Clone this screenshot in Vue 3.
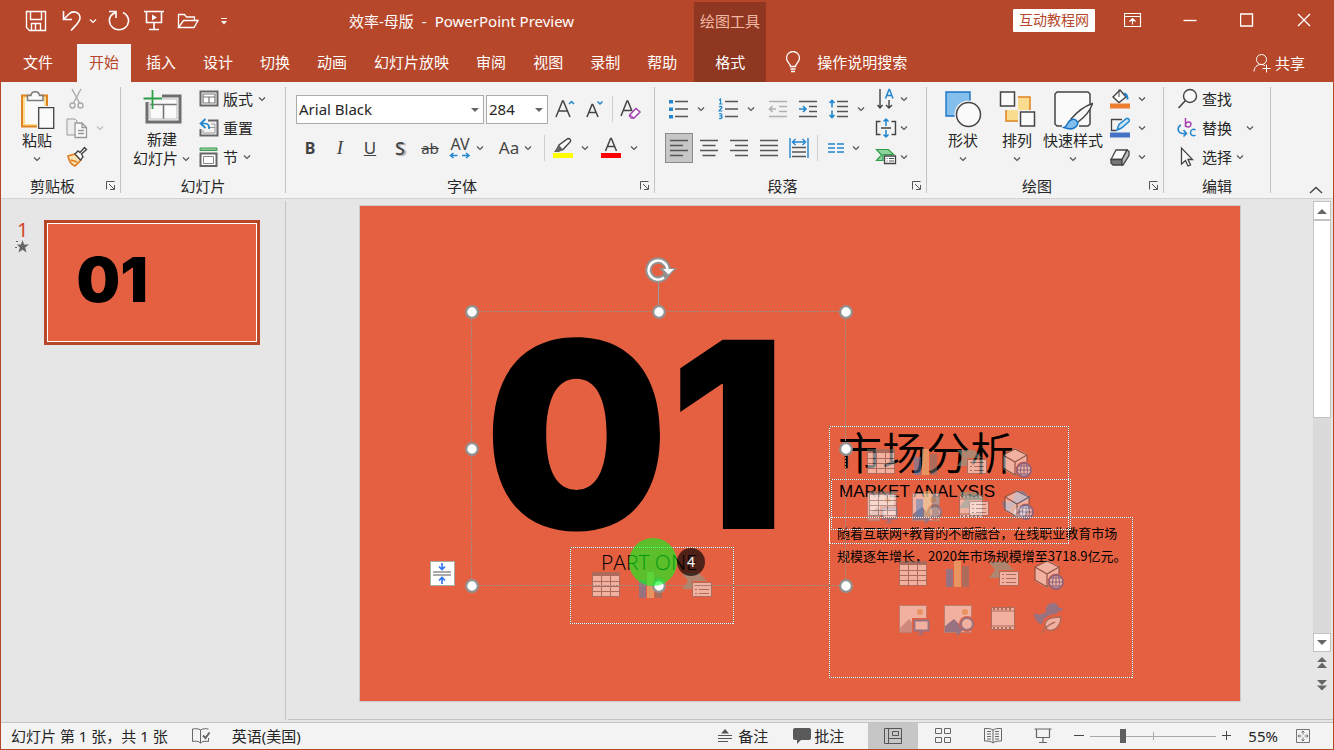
<script setup>
import { h, ref } from 'vue'

const Chevron = () =>
  h('svg', { class: 'chev', width: 10, height: 10, viewBox: '0 0 10 10', 'aria-hidden': 'true' }, [
    h('path', { d: 'M2 3.5L5 6.5L8 3.5', fill: 'none', stroke: 'currentColor', 'stroke-width': 1.2 }),
  ])

const Launcher = () =>
  h('button', { class: 'launcher', 'aria-label': 'Options' }, [
    h('svg', { width: 10, height: 10, viewBox: '0 0 10 10' }, [
      h('path', { d: 'M.5 8.5V.5H8.5M3 3L8 8M8.5 4V8.5H4', fill: 'none', stroke: '#555' }),
    ]),
  ])

const tabs = ['开始', '插入', '设计', '切换', '动画', '幻灯片放映', '审阅', '视图', '录制', '帮助']
const active = ref('开始')
const zoom = ref(25)
const handles = [
  [112, 106], [299, 106], [486, 106],
  [112, 243], [486, 243],
  [112, 380], [299, 380], [486, 380],
]
const contentIcons = ['table', 'chart', 'smartart', 'cube', 'picture', 'online', 'video', 'duck']
const placeholders = [
  { x: 507, y: 242, count: 8 },
  { x: 509, y: 284, count: 4 },
  { x: 539, y: 354, count: 8 },
  { x: 232, y: 365, count: 3 },
]
const frames = 'M469.500 220.500h239v117h-239zM471.500 273.500h239v50h-239zM469.500 311.500h303v160h-303zM210.500 341.500h163v76h-163z'
</script>

<template>
  <div class="window">
    <header class="top">
      <div class="titlebar">
        <div class="quick">
          <button aria-label="保存">
            <svg width="22" height="22" viewBox="0 0 22 22"><path d="M1.500 1.500h19v19h-16l-3-3zM5.500 1.500v8h11v-8M6.500 20.500v-7h9v7M10.500 14v6" stroke-width="1.400" /></svg>
          </button>
          <button class="undo" aria-label="撤销">
            <svg width="20" height="22" viewBox="0 0 20 22"><path d="M1.500 1v8.500h8.500M2 9l5-5c4-4 11-2 11 4 0 4-4 7-9 12.500" stroke-width="1.600" /></svg>
          </button>
          <Chevron />
          <button class="redo" aria-label="重复">
            <svg width="22" height="22" viewBox="0 0 22 22"><path d="M1 1.500h7v6.500M7.500 2.500C3 4.500 1 8 1.500 11.500c1 11 18 11 19 0C21 8 18.500 4 15 2.500" stroke-width="1.600" /></svg>
          </button>
          <button class="show" aria-label="放映">
            <svg width="20" height="22" viewBox="0 0 20 22"><path d="M0 1.500h20M2.500 2v10.500h15V2M10 13v6.500M5 19.500h10" stroke-width="1.600" /><path d="M8 4.500l5 3-5 3z" fill="#fff" stroke="none" /></svg>
          </button>
          <button class="open" aria-label="打开">
            <svg width="22" height="18" viewBox="0 0 22 18"><path d="M1.500 15.500V2.500h6l2 2.500h8v3.500M1.500 15.500l5-7h14.500l-4 7z" stroke-width="1.300" /></svg>
          </button>
          <button class="custom" aria-label="自定义">
            <svg width="8" height="10" viewBox="0 0 8 10"><path d="M1 2.500h6" /><path d="M1 5h6l-3 3.500z" fill="#fff" stroke="none" /></svg>
          </button>
        </div>
        <div class="doc-title"><span>效率-母版</span><span>-</span><span>PowerPoint Preview</span></div>
        <div class="context-title">绘图工具</div>
        <div class="controls">
          <span class="badge">互动教程网</span>
          <button aria-label="功能区显示选项">
            <svg width="18" height="14" viewBox="0 0 18 14"><path d="M.5 .5h16v13h-16zM.5 3.500h16M8.500 11.500v-6M5.500 8.500l3-3 3 3" stroke-width="1.200" /></svg>
          </button>
          <button aria-label="最小化"><svg width="14" height="14" viewBox="0 0 14 14"><path d="M.5 7.500h13" stroke-width="1.400" /></svg></button>
          <button aria-label="最大化"><svg width="14" height="14" viewBox="0 0 14 14"><path d="M.5 1h12v12h-12z" stroke-width="1.400" /></svg></button>
          <button aria-label="关闭"><svg width="14" height="14" viewBox="0 0 14 14"><path d="M1 1l12 12M13 1L1 13" stroke-width="1.400" /></svg></button>
        </div>
      </div>
      <nav class="tabs">
        <button class="tab file">文件</button>
        <button v-for="t in tabs" :key="t" class="tab" :class="{ active: t === active }" @click="active = t">{{ t }}</button>
        <button class="tab context">格式</button>
        <button class="tell">
          <svg width="16" height="22" viewBox="0 0 16 22"><path d="M5.500 15.500c0-3-4-4-4-8.500a6.500 6.500 0 0 1 13 0c0 4.500-4 5.500-4 8.500zM5.500 18h5M6 20.500h4" stroke-width="1.300" /></svg>
          操作说明搜索
        </button>
        <button class="share">
          <svg width="20" height="20" viewBox="0 0 20 20"><circle cx="8.500" cy="6.500" r="5" /><path d="M1 18.500c0-4 3-7 7-7 1.500 0 3 .5 4 1.200M13.500 11.500v8M9.500 15.500h8" /></svg>
          共享
        </button>
      </nav>
    </header>

    <section class="ribbon">
      <div class="group clipboard">
        <div class="body">
          <button class="big">
            <svg width="36" height="40" viewBox="0 0 36 40">
              <path d="M3 5.500h25v31H3z" fill="#fbdc93" stroke="#e08321" stroke-width="2" /><path d="M6 8h19v26H6z" fill="#fafafa" />
              <path d="M8.500 10.500v-5h3.500c.5-5 8-5 8.500 0h3.500v5z" fill="#fafafa" stroke="#7d7d7d" stroke-width="1.500" />
              <path d="M18 16h19v24H18z" fill="#f3f3f3" /><path d="M19.700 17.700h15v20.600h-15z" fill="#fafafa" stroke="#444" stroke-width="1.300" />
            </svg>
            <span>粘贴</span><Chevron />
          </button>
          <div class="small">
            <button class="dim" aria-label="剪切">
              <svg width="22" height="22" viewBox="0 0 22 22" stroke="#aaa" stroke-width="1.400"><path d="M6 1l7.500 14M15 1L7.500 15" /><circle cx="6.500" cy="17.500" r="2.500" /><circle cx="14.500" cy="17.500" r="2.500" /></svg>
            </button>
            <button class="dim" aria-label="复制">
              <svg width="22" height="22" viewBox="0 0 22 22" stroke="#999"><path d="M1 2h8l2 2v14H1z" fill="#eee" /><path d="M9 6h7l4.500 4.500v10H9zM16 6v4.500h4.500M12 13.500h6M12 16.500h6" fill="#f8f8f8" stroke-width="1.300" /></svg>
              <Chevron />
            </button>
            <button aria-label="格式刷">
              <svg width="22" height="22" viewBox="0 0 22 22"><path d="M2 10l7-2 6 6-6 6c-3-1-6-5-7-10z" fill="#fbe3b4" stroke="#e07b1f" stroke-width="1.600" /><path d="M5 14l6 2" stroke="#e07b1f" stroke-width="1.600" /><path d="M9 8l3-3 2 1.500 4.500-5 2 2-5 4.500 1.500 3-2.500 3z" fill="#fff" stroke="#444" stroke-width="1.400" /></svg>
            </button>
          </div>
        </div>
        <footer><span>剪贴板</span><Launcher /></footer>
      </div>

      <div class="group slides">
        <div class="body">
          <button class="big">
            <svg width="40" height="40" viewBox="0 0 40 40">
              <path d="M5 6h33v26H5z" fill="#fafafa" stroke="#6e6e6e" stroke-width="3" /><path d="M8 14.500h27M21.500 15v14" stroke="#777" stroke-width="1.600" /><path d="M8 9h27v20H8z" stroke="#bbb" />
              <path d="M0 4h20v8H0z" fill="#f3f3f3" /><path d="M10.500 0v19M1.500 8.500H20" stroke="#2f9e49" stroke-width="1.800" />
            </svg>
            <span>新建</span><span class="pair">幻灯片<Chevron /></span>
          </button>
          <div class="small">
            <button>
              <svg width="20" height="20" viewBox="0 0 20 20"><path d="M1.500 2.500h17v14h-17z" fill="#fff" stroke="#666" stroke-width="2" /><path d="M4 5h12v9H4zM4 8h12M10 8v6" stroke="#777" stroke-width="1.200" /></svg>
              版式<Chevron />
            </button>
            <button>
              <svg width="20" height="20" viewBox="0 0 20 20"><path d="M9 2.500h9.500v15h-17V11" stroke="#666" stroke-width="2" /><path d="M12 6h4v9H4v-3M9 9.500h7" stroke="#999" /><path d="M6.500 1L1.500 5.500l5 4.500M2 5.500h4c3 0 4.500 2 4 5.500" stroke="#2086d0" stroke-width="1.700" /></svg>
              重置
            </button>
            <button>
              <svg width="20" height="20" viewBox="0 0 20 20"><path d="M1 1h17v2.500H1z" fill="#8fcf9c" stroke="#3c9a50" /><path d="M1.500 6.500h16v12.500h-16z" fill="#fff" stroke="#666" stroke-width="2" /><path d="M4.500 9.500h10v7h-10z" stroke="#888" /></svg>
              节<Chevron />
            </button>
          </div>
        </div>
        <footer><span>幻灯片</span></footer>
      </div>

      <div class="group font">
        <div class="body rows">
          <div class="row first">
            <span class="combo name"><select aria-label="字体"><option>Arial Black</option></select></span>
            <span class="combo size"><select aria-label="字号"><option>284</option></select></span>
            <button class="w30 grow" aria-label="增大字号"><svg width="20" height="22" viewBox="0 0 20 22"><path d="M1 19L7.500 3h.8L15 19M3.500 13h9" stroke="#444" stroke-width="1.500" /><path d="M14 6l2.500-2.500L19 6" stroke="#2086d0" stroke-width="1.500" /></svg></button>
            <button class="w30" aria-label="减小字号"><svg width="20" height="22" viewBox="0 0 20 22"><path d="M2 19L7 6.500h.8L13 19M4 14.500h7" stroke="#444" stroke-width="1.500" /><path d="M12.500 3.500L15 6l2.500-2.500" stroke="#2086d0" stroke-width="1.500" /></svg></button>
            <i class="sep" />
            <button class="w30 clear" aria-label="清除格式"><svg width="22" height="22" viewBox="0 0 22 22"><path d="M1 18L7 3h.8L12 13M3.500 12.500h8" stroke="#444" stroke-width="1.500" /><path d="M10 16.500l6-6 4 3.500-6 6h-2.500L9.500 18z" fill="#fff" stroke="#a43fb0" stroke-width="1.500" /><path d="M10 16.500l4 3.500h-2.500L9.500 18z" fill="#d79be0" stroke="#a43fb0" /></svg></button>
          </div>
          <div class="row format">
            <button class="w30 glyph"><b>B</b></button>
            <button class="w30 glyph"><em>I</em></button>
            <button class="w30 glyph"><u>U</u></button>
            <button class="w30 glyph shadow"><b>S</b></button>
            <button class="w30 glyph strike"><s>ab</s></button>
            <button class="w30 spacing" aria-label="字符间距"><span>AV</span><svg width="22" height="8" viewBox="0 0 22 8"><path d="M1.500 3.500h7M4.500 1l-3 2.500 3 2.500M13 3.500h7M17 1l3 2.500L17 6" stroke="#2086d0" stroke-width="1.500" /></svg></button>
            <Chevron />
            <button class="case">Aa</button><Chevron />
            <i class="sep" />
            <button class="mark" aria-label="突出显示"><svg width="22" height="22" viewBox="0 0 22 22"><path d="M4 14l3-6 9-6.500c2 0 3 1.500 2.500 3L11 12.500z" fill="#fff" stroke="#444" stroke-width="1.400" /><path d="M2 15l5-7 4 4.500-4 2.500z" fill="#666" /><path d="M1 16h20v5H1z" fill="#ff0" /></svg></button>
            <Chevron />
            <button class="color" aria-label="字体颜色"><svg width="22" height="22" viewBox="0 0 22 22"><path d="M5.500 14L10.600 1.500h.8L16.500 14M7.500 9.500h7" stroke="#444" stroke-width="1.500" /><path d="M1 16h20v5H1z" fill="#f00" /></svg></button>
            <Chevron />
          </div>
        </div>
        <footer><span>字体</span><Launcher /></footer>
      </div>

      <div class="group para">
        <div class="body">
          <div class="rows">
            <div class="row first list">
              <button class="w30" aria-label="项目符号"><svg width="20" height="20" viewBox="0 0 20 20"><path d="M7 2.500h13M7 10h13M7 17.500h13" stroke="#555" stroke-width="1.600" /><path d="M1 1h4v3.500H1zM1 8.500h4V12H1zM1 16h4v3.500H1z" fill="#2086d0" /></svg></button>
              <Chevron />
              <button class="w30" aria-label="编号"><svg width="20" height="22" viewBox="0 0 20 22"><path d="M7 3.500h13M7 11h13M7 18.500h13" stroke="#555" stroke-width="1.600" /><path d="M1 2l1.500-1v5M1 6h3.500M1 9c1-1 3-1 3 .5L1 13h3.500M1 16c1-.5 3-.5 3 1L2.500 18C5 18 4.500 21 1 20.500" stroke="#2086d0" stroke-width="1.200" /></svg></button>
              <Chevron />
              <button class="w30" aria-label="减少缩进"><svg width="20" height="20" viewBox="0 0 20 20" stroke="#b0b0b0" stroke-width="1.600"><path d="M1 2.500h18M11 7.500h8M11 12.500h8M1 17.500h18M1.500 10H8M4.500 7l-3 3 3 3" /></svg></button>
              <button class="w30" aria-label="增加缩进"><svg width="20" height="20" viewBox="0 0 20 20"><path d="M1 2.500h18M11 7.500h8M11 12.500h8M1 17.500h18" stroke="#555" stroke-width="1.600" /><path d="M1 10h6.500M5 7l3 3-3 3" stroke="#2086d0" stroke-width="1.600" /></svg></button>
              <button class="w30" aria-label="行距"><svg width="20" height="20" viewBox="0 0 20 20"><path d="M9 2.500h11M9 7.500h11M9 12.500h11M9 17.500h11" stroke="#555" stroke-width="1.600" /><path d="M4 1.500v7M1.500 4L4 1.500 6.500 4M4 11.500v7M1.500 16L4 18.500 6.500 16" stroke="#2086d0" stroke-width="1.600" /></svg></button>
              <Chevron />
            </div>
            <div class="row align">
              <button class="w30 pressed" aria-label="左对齐"><svg width="20" height="20" viewBox="0 0 20 20" stroke="#555" stroke-width="1.600"><path d="M1 2.500h18M1 7.500h13M1 12.500h18M1 17.500h13" /></svg></button>
              <button class="w30" aria-label="居中"><svg width="20" height="20" viewBox="0 0 20 20" stroke="#555" stroke-width="1.600"><path d="M1 2.500h18M3.500 7.500h13M1 12.500h18M3.500 17.500h13" /></svg></button>
              <button class="w30" aria-label="右对齐"><svg width="20" height="20" viewBox="0 0 20 20" stroke="#555" stroke-width="1.600"><path d="M1 2.500h18M6 7.500h13M1 12.500h18M6 17.500h13" /></svg></button>
              <button class="w30" aria-label="两端对齐"><svg width="20" height="20" viewBox="0 0 20 20" stroke="#555" stroke-width="1.600"><path d="M1 2.500h18M1 7.500h18M1 12.500h18M1 17.500h18" /></svg></button>
              <button class="w30" aria-label="分散对齐"><svg width="20" height="20" viewBox="0 0 20 20"><path d="M3 9.500h14M3 14h14M3 18.500h14" stroke="#555" stroke-width="1.600" /><path d="M1 0v20M19 0v20M3.500 4h13M6.500 1l-3 3 3 3M13.500 1l3 3-3 3" stroke="#2086d0" stroke-width="1.400" /></svg></button>
              <i class="sep" />
              <button class="w30 cols" aria-label="分栏"><svg width="18" height="12" viewBox="0 0 18 12"><path d="M1 2h7M1 6h7M1 10h7M10 2h7M10 6h7M10 10h7" stroke="#2086d0" stroke-width="1.600" /></svg></button>
              <Chevron />
            </div>
          </div>
          <div class="small wide">
            <button aria-label="文字方向"><svg width="22" height="22" viewBox="0 0 22 22"><path d="M5 1v19M2.500 17L5 20l2.500-3M14 12v8M11 17l3 3 3-3" stroke="#444" stroke-width="1.400" /><path d="M10.500 10.500L14 1.500h.5l3.500 9M11.500 7.500h5.500" stroke="#2086d0" stroke-width="1.500" /></svg><Chevron /></button>
            <button aria-label="对齐文本"><svg width="22" height="22" viewBox="0 0 22 22"><path d="M5.500 4.500h-4v13h4M16.500 4.500h4v13h-4M6 11h10" stroke="#444" stroke-width="1.400" /><path d="M11 2v7M8.500 4.500L11 2l2.500 2.500M11 13v7M8.500 17.500L11 20l2.500-2.500" stroke="#2086d0" stroke-width="1.500" /></svg><Chevron /></button>
            <button aria-label="转换为 SmartArt"><svg width="22" height="22" viewBox="0 0 22 22"><path d="M1.500 3.500h12l5 5H8v6H1.500l5-5.500z" fill="#8fd3a0" stroke="#2f9e49" stroke-width="1.200" /><path d="M9.500 10h11v7.500h-11z" fill="#fff" stroke="#444" stroke-width="1.300" /><path d="M11.500 12.500h1M14 12.500h5M11.500 15h1M14 15h5" stroke="#555" /></svg><Chevron /></button>
          </div>
        </div>
        <footer><span>段落</span><Launcher /></footer>
      </div>

      <div class="group draw">
        <div class="body">
          <button class="big">
            <svg width="38" height="40" viewBox="0 0 38 40"><path d="M2 2h24v24H2z" fill="#83beec" stroke="#1a76c4" stroke-width="1.400" /><circle cx="24.500" cy="24.500" r="14" fill="#f3f3f3" /><circle cx="24.500" cy="24.500" r="12" fill="#fafafa" stroke="#444" stroke-width="1.500" /></svg>
            <span>形状</span><Chevron />
          </button>
          <button class="big arrange">
            <svg width="38" height="40" viewBox="0 0 38 40"><path d="M8 7h24v24H8z" fill="#f9dc8e" stroke="#e08321" stroke-width="1.500" /><path d="M0 0h20v20H0zM20 20h18v18H20z" fill="#f3f3f3" /><path d="M2.500 2h14v14h-14zM22.500 22h14v14h-14z" fill="#fafafa" stroke="#444" stroke-width="1.500" /></svg>
            <span>排列</span><Chevron />
          </button>
          <button class="big styles">
            <svg width="40" height="40" viewBox="0 0 40 40"><path d="M9 36H4l-2-2V4l2-2h31l2 2v30l-2 2h-9" fill="#fafafa" stroke="#444" stroke-width="1.500" /><path d="M18 29C24 22 32 16 39.500 13.500c-2 7-7 13-15 19z" fill="#f8f8f8" stroke="#444" stroke-width="1.400" /><path d="M11 37.500c4-1 3-7 8-8 4-1 7 3 5 6-3 4-8 4-13 2z" fill="#83beec" stroke="#1a76c4" stroke-width="1.500" /></svg>
            <span>快速样式</span><Chevron />
          </button>
          <div class="small wide">
            <button aria-label="形状填充"><svg width="22" height="22" viewBox="0 0 22 22"><path d="M4 9l7-7 6 7-7 5.500z" fill="#fff" stroke="#444" stroke-width="1.400" /><path d="M10 1.500V9" stroke="#444" /><path d="M15 5.500c3 .5 3.500 3 3.500 6" stroke="#2086d0" stroke-width="2" /><path d="M1 15.500h20v5H1z" fill="#ed7d31" /></svg><Chevron /></button>
            <button aria-label="形状轮廓"><svg width="22" height="22" viewBox="0 0 22 22"><path d="M13 2.500H2.500v11H7" stroke="#444" stroke-width="1.300" /><path d="M8 13l2-5.500 7.500-6c2-.5 3.500 1 2.500 3L12.500 11z" fill="#cfe6f7" stroke="#2086d0" stroke-width="1.500" /><path d="M1 15.500h20v5H1z" fill="#4472c4" /></svg><Chevron /></button>
            <button aria-label="形状效果"><svg width="22" height="22" viewBox="0 0 22 22"><path d="M7 4h11L13 13.500H2z" fill="#fafafa" stroke="#444" stroke-width="1.300" /><path d="M2 13.500h11V19H4l-2-2z" fill="#777" stroke="#444" stroke-width="1.300" /><path d="M13 13.500L18 4l2 1.500v4L14 19h-1z" fill="#bbb" stroke="#444" stroke-width="1.300" /></svg><Chevron /></button>
          </div>
        </div>
        <footer><span>绘图</span><Launcher /></footer>
      </div>

      <div class="group edit">
        <div class="body">
          <div class="small">
            <button><svg width="22" height="22" viewBox="0 0 22 22"><circle cx="13" cy="8" r="6.500" fill="#fafafa" stroke="#444" stroke-width="1.400" /><path d="M8.500 12.500L1.500 20" stroke="#444" stroke-width="1.600" /></svg>查找</button>
            <button class="replace"><svg width="22" height="22" viewBox="0 0 22 22"><path d="M8.500 1v9M8.500 7c1-3 6-2.500 5.500.5s-4.500 3.500-5.500.5" stroke="#a43fb0" stroke-width="1.500" /><path d="M18.500 13c-2-1.500-5-.5-5 2.500s3 4 5 2.500M4 8c-4 2-4 7 1 8.500h4M6.500 13l3 3.500-3 3" stroke="#2086d0" stroke-width="1.500" /></svg>替换<Chevron /></button>
            <button><svg width="22" height="22" viewBox="0 0 22 22"><path d="M4.500 2v16l4-3.500 2.500 5.500 2.500-1-2.500-5.500h4.500z" fill="#fafafa" stroke="#444" stroke-width="1.300" /></svg>选择<Chevron /></button>
          </div>
        </div>
        <footer><span>编辑</span></footer>
      </div>
      <button class="collapse" aria-label="折叠功能区"><svg width="14" height="8" viewBox="0 0 14 8"><path d="M1 7l6-5.500L13 7" stroke="#444" stroke-width="1.400" /></svg></button>
    </section>

    <main class="work">
      <aside class="thumbs">
        <div class="index"><span>1</span>
          <svg width="14" height="13" viewBox="0 0 14 13"><path d="M7.500 0l1.600 4.500H14l-3.800 3 1.300 5-4-2.800-4 2.800 1.300-5L2 4.500h4z" fill="#666" /><path d="M1 1.500h2M0 7.500h2" stroke="#666" /></svg>
        </div>
        <div class="thumb">
          <svg viewBox="0 0 880 495"><rect width="880" height="495" fill="#e46040" /><text x="121" y="329" class="numeral">01</text></svg>
        </div>
      </aside>

      <div class="pane">
        <div class="stage">
          <svg class="slide" viewBox="0 0 880 495">
            <defs>
              <g id="table"><path d="M1 3h26v22H1z" fill="#fff" /><path d="M0 0h28v4H0z" fill="#777" /><path d="M.5 4v20.500h27V4M1 9.500h26M1 14.500h26M1 19.500h26M9.500 4v20M18.500 4v20" stroke="#777" /></g>
              <g id="chart"><path d="M0 8h7v18H0z" fill="#4f84c0" /><path d="M8 0h7v26H8z" fill="#eac882" /><path d="M16 5h7v21h-7z" fill="#777" /></g>
              <g id="smartart"><path d="M0 0h17l8 8H10v8H0l6-8z" fill="#7eaaa0" /><path d="M10.500 9.500h19v14h-19z" fill="#fff" stroke="#777" /><path d="M13 12.500h2M17 12.500h10M13 16.500h2M17 16.500h10M13 20.500h2M17 20.500h10" stroke="#777" /></g>
              <g id="cube"><path d="M1 7L13 0l12 6v15l-12 7L1 21z" fill="#fff" /><path d="M1 7L13 1l12 6v12L13 27 1 20zM1 7l12 7 12-7M13 14v13" stroke="#444" stroke-width="1.200" /><circle cx="22" cy="22" r="8.500" fill="#e46040" /><circle cx="22" cy="22" r="6.800" fill="#fff" /><path d="M15 22h14M22 15v14M17 18h10M17 26h10" stroke="#2f64b8" /><ellipse cx="22" cy="22" rx="3.500" ry="7" stroke="#2f64b8" /><circle cx="22" cy="22" r="7" stroke="#2f64b8" stroke-width="1.600" /></g>
              <g id="picture"><path d="M.5 .5h27v27H.5z" fill="#fff" stroke="#999" /><circle cx="21" cy="7" r="3" fill="#eac882" /><path d="M1 23l9-9 8 9v4H1z" fill="#bcb0b8" /><path d="M13 13h19v18H13z" fill="#e46040" /><path d="M15.500 15.500h14v10h-14z" fill="#fff" stroke="#4f84c0" stroke-width="1.800" /><path d="M22 26v3M19 29h6" stroke="#4f84c0" stroke-width="1.500" /></g>
              <g id="online"><path d="M.5 .5h27v27H.5z" fill="#fff" stroke="#999" /><circle cx="21" cy="7" r="3" fill="#eac882" /><path d="M1 21l9-7 7 7v6H1z" fill="#4f84c0" /><circle cx="23" cy="19" r="8" fill="#e46040" /><circle cx="23" cy="19" r="6" fill="#fff" stroke="#4f84c0" stroke-width="2" /><path d="M19 23l-6 7" stroke="#4f84c0" stroke-width="2.400" /></g>
              <g id="video"><path d="M0 0h24v23H0z" fill="#fff" /><path d="M.5 .5h23v22H.5zM1 4h22M1 19h22" stroke="#777" /><path d="M2 2h20M2 21h20" stroke="#777" stroke-width="2" stroke-dasharray="2 2" /></g>
              <g id="duck"><path d="M0 10c4 2 8 2 12-1-1-5 2-9 7-9 4 0 5 2 6 5h4c-1 3-4 4-6 4 0 3 0 5-2 6l-6 7C6 23 0 18 0 10z" fill="#4f84c0" /><path d="M28 13c-10-1-18 2-18 9 0 10 17 9 18-9z" fill="#fff" stroke="#e46040" stroke-width="4" /><path d="M27 14c-9 0-16 2-16 8 0 9 15 7 16-8z" fill="#fff" stroke="#777" stroke-width="1.400" /><path d="M8 30c3-6 8-9 13-11" stroke="#777" stroke-width="1.400" /></g>
            </defs>
            <rect width="880" height="495" fill="#e46040" />
            <text x="124" y="323" class="numeral">01</text>
            <text x="478" y="264" class="headline">市场分析</text>
            <text x="479" y="291" class="subtitle">MARKET ANALYSIS</text>
            <text x="477" y="332" class="copy">随着互联网+教育的不断融合，在线职业教育市场</text>
            <text x="477" y="355" class="copy">规模逐年增长，2020年市场规模增至3718.9亿元。</text>
            <text x="241" y="364" class="part">PART ONE</text>
            <g v-for="(p, n) in placeholders" :key="n" opacity="0.5">
              <use v-for="(name, i) in contentIcons.slice(0, p.count)" :key="name" :href="'#' + name" :x="p.x + [0, 47, 90, 135, 0, 45, 92, 135][i]" :y="p.y + [1, 1, 2, 0, 45, 45, 47, 43][i]" />
            </g>
            <g shape-rendering="crispEdges">
              <path :d="frames" stroke="#8a6a60" />
              <path :d="frames" stroke="#fff" stroke-dasharray="1 1" />
              <path d="M111.500 105.500h374v274h-374z" stroke="#a08a80" stroke-dasharray="2 1" />
            </g>
            <path d="M298.500 75v25" stroke="#999" stroke-width="1.200" />
            <circle v-for="(p, i) in handles" :key="i" :cx="p[0]" :cy="p[1]" r="5.800" fill="#fff" stroke="#929292" stroke-width="2.200" />
            <circle cx="298" cy="64" r="9.500" stroke="#929292" stroke-width="6.500" />
            <path d="M299 62h18l-9 9z" fill="#929292" />
            <path d="M304 71.500A9.500 9.500 0 1 1 307.500 63" stroke="#fff" stroke-width="2.400" />
            <path d="M303 63h11l-5.500 5.500z" fill="#fff" />
            <g>
              <path d="M70.500 355.500h24v24h-24z" fill="#fff" stroke="#aaa" /><path d="M73 366h18M73 369h18" stroke="#555" /><path d="M82 357v6M79 360.500l3 3 3-3M82 378v-6M79 374.500l3-3 3 3" stroke="#2f72f0" stroke-width="1.600" />
            </g>
            <circle cx="293" cy="356" r="24" fill="#00fd1c" fill-opacity="0.600" />
            <circle cx="331" cy="356" r="14" fill="#000" fill-opacity="0.650" />
            <text x="331" y="361" class="count">4</text>
          </svg>
        </div>
        <div class="scroll">
          <button class="cap" aria-label="向上"><svg width="10" height="6" viewBox="0 0 10 6"><path d="M0 6l5-5 5 5z" fill="#666" /></svg></button>
          <div class="track"><div class="grip" /></div>
          <button class="cap" aria-label="向下"><svg width="10" height="6" viewBox="0 0 10 6"><path d="M0 0h10L5 5z" fill="#666" /></svg></button>
          <button class="jump" aria-label="上一张"><svg width="10" height="12" viewBox="0 0 10 12"><path d="M5 0l5 5H0zM5 5.500l5 5.500H0z" fill="#666" /></svg></button>
          <button class="jump" aria-label="下一张"><svg width="10" height="12" viewBox="0 0 10 12"><path d="M0 1h10L5 6zM0 6.500h10l-5 5z" fill="#666" /></svg></button>
        </div>
      </div>
    </main>

    <footer class="status">
      <span class="pos">幻灯片 第 1 张，共 1 张</span>
      <button class="proof" aria-label="拼写检查"><svg width="20" height="18" viewBox="0 0 20 18"><path d="M9.500 16V3C7.500 1.500 4 1.500 1.500 2v12.500c3-.5 6-.5 8 1.500 2-2 5-2 8-1.500V11M9.500 3c2-1.500 5.500-1.500 8-1" stroke="#666" /><path d="M12 8.500l2.500 2.500L18.500 5.500" stroke="#666" stroke-width="2" /></svg></button>
      <span>英语(美国)</span>
      <button class="notes"><svg width="16" height="16" viewBox="0 0 16 16"><path d="M8 1l4 4.500H4z" fill="#555" /><path d="M1 7.500h14M1 10.500h14M1 13.500h10" stroke="#555" /></svg>备注</button>
      <button class="comments"><svg width="18" height="18" viewBox="0 0 18 18"><path d="M2 1h14q2 0 2 2v8q0 2-2 2H8l-4 4v-4H2q-2 0-2-2V3q0-2 2-2z" fill="#5a5a5a" /></svg>批注</button>
      <div class="views">
        <button class="on" aria-label="普通视图"><svg width="18" height="18" viewBox="0 0 18 18"><path d="M.5 1.500h17v15H.5zM4.500 2v14M5 11.500h12M8.500 4.500h6v4h-6z" stroke="#555" /></svg></button>
        <button aria-label="幻灯片浏览"><svg width="18" height="18" viewBox="0 0 18 18"><path d="M1.500 1.500h6v5h-6zM10.500 1.500h6v5h-6zM1.500 10.500h6v5h-6zM10.500 10.500h6v5h-6z" stroke="#666" /></svg></button>
        <button aria-label="阅读视图"><svg width="18" height="18" viewBox="0 0 18 18"><path d="M9 16V3C7 1.500 4 1.500 .5 1.500v12.500c3 0 6.500 0 8.500 2 2-2 5.500-2 8.500-2V1.500C14 1.500 11 1.500 9 3" stroke="#666" /><path d="M3 4.500h4M3 7h4M3 9.500h4M3 12h4M11 4.500h4M11 7h4M11 9.500h4M11 12h4" stroke="#666" /></svg></button>
        <button aria-label="幻灯片放映"><svg width="18" height="18" viewBox="0 0 18 18"><path d="M.5 2h17M2.500 2.500v8h13v-8M9 11v4.500M5 15.500h8" stroke="#666" stroke-width="1.200" /></svg></button>
      </div>
      <div class="zoom">
        <button aria-label="缩小"><svg width="12" height="12" viewBox="0 0 12 12"><path d="M1 5.500h10" stroke="#444" /></svg></button>
        <input v-model="zoom" type="range" min="0" max="100" aria-label="缩放">
        <button aria-label="放大"><svg width="12" height="12" viewBox="0 0 12 12"><path d="M1 5.500h9M5.500 1v9" stroke="#444" /></svg></button>
        <button class="percent">55%</button>
        <button class="fit" aria-label="适应窗口"><svg width="14" height="14" viewBox="0 0 14 14"><path d="M.5 .5h13v13H.5zM7 2v3.500M7 8.500V12M2 7h3.500M8.500 7H12M5.500 3.500L7 2l1.500 1.500M5.500 10.500L7 12l1.500-1.500M3.500 5.500L2 7l1.500 1.500M10.500 5.500L12 7l-1.500 1.500" stroke="#666" stroke-width="0.900" /></svg></button>
      </div>
    </footer>
  </div>
</template>

<style scoped>
.window { display: flex; flex-direction: column; min-height: 100vh; box-sizing: border-box; border: solid #b7472a; border-width: 0 1px 1px; background: #e6e6e6; color: #262626; font: 15px/20px "Noto Sans", "Noto Sans CJK SC", sans-serif; white-space: nowrap; }
button { display: flex; align-items: center; justify-content: center; flex: none; margin: 0; padding: 0; border: 0; background: none; color: inherit; font: inherit; }
svg { display: block; flex: none; fill: none; }
.chev { color: #555; }

.top { background: #b7472a; color: #fff; }
.top svg { stroke: #fff; }
.titlebar { display: grid; grid-template-columns: 348px 345px 72px 1fr; height: 44px; }
.quick { display: flex; align-items: center; padding: 0 0 2px 24px; }
.undo { margin-left: 15px; }
.quick .chev { margin-left: 6px; color: #fff; }
.redo { margin-left: 10px; }
.show { margin-left: 14px; }
.open { margin-left: 13px; }
.custom { margin-left: 21px; }
.doc-title { display: flex; align-self: center; gap: 8px; padding-bottom: 2px; }
.context-title { display: flex; align-items: center; justify-content: center; margin-top: 2px; padding-bottom: 4px; background: #8f3720; color: #f4b7a4; }
.controls { display: flex; justify-content: flex-end; align-items: center; padding: 0 1px 4px 0; }
.controls button { width: 57px; height: 40px; }
.badge { margin-right: 9px; padding: 1px 6px 2px; border-radius: 1px; background: #fff; color: #b7472a; font-size: 14px; }
.tabs { display: flex; height: 38px; padding-left: 10px; }
.tab { padding: 0 12px 2px; margin-right: 3px; }
.tab.file { margin-right: 12px; }
.tab.active { background: #f3f3f3; color: #b7472a; }
.tab.context { width: 72px; margin: 0 0 0 2px; background: #8f3720; }
.tell { gap: 16px; margin-left: 19px; padding-bottom: 2px; }
.share { gap: 2px; margin: 0 28px 0 auto; }

.ribbon { display: flex; height: 116px; border-bottom: 1px solid #d2d2d2; background: #f3f3f3; }
.group { display: flex; flex-direction: column; flex: none; box-sizing: border-box; margin: 5px 0; border-right: 1px solid #c3c3c3; }
.clipboard { width: 120px; }
.slides { width: 165px; }
.font { width: 369px; }
.para { width: 272px; }
.draw { width: 237px; }
.edit { width: 107px; }
.body { display: flex; flex: 1; }
.rows { display: flex; flex-direction: column; }
.group footer { display: flex; height: 15px; align-items: center; }
.group footer span { flex: 1; text-align: center; }
.launcher { width: 14px; margin-right: 2px; }
.launcher svg { margin-top: 4px; }
.big { flex-direction: column; justify-content: flex-start; padding-top: 3px; }
.big > svg:last-child { margin-top: 4px; }
.pair { display: flex; align-items: center; gap: 3px; }
.small { display: flex; flex-direction: column; margin-top: -3px; }
.small button { height: 29px; justify-content: flex-start; gap: 4px; }
.small.wide button { gap: 2px; }
.clipboard .big { width: 44px; margin-left: 14px; }
.clipboard .small { margin-left: 7px; }
.dim .chev { margin-left: 3px; color: #bbb; }
.slides .big { width: 66px; margin: 0 4px 0 8px; }
.slides .big span { line-height: 19px; }

.row { display: flex; align-items: center; height: 30px; }
.row.first { margin: 7px 0 9px; }
.font .body { padding-left: 9px; }
.combo { position: relative; height: 29px; box-sizing: border-box; border: 1px solid #ababab; background: #fff; }
.combo::after { content: ""; position: absolute; right: 4px; top: 12px; border: 4px solid transparent; border-top-color: #666; pointer-events: none; }
.combo select { width: 100%; height: 100%; padding: 0 2px; border: 0; appearance: none; background: none; color: inherit; font: inherit; }
.combo.name { width: 188px; margin: 0 2px 0 1px; }
.combo.size { width: 62px; }
.w30 { width: 30px; height: 30px; }
.grow { margin-left: 2px; }
.sep { width: 1px; height: 26px; background: #d0d0d0; }
.row.first .sep { margin-left: 2px; }
.clear { margin-left: 3px; }
.glyph { color: #444; font-size: 17px; }
.glyph b { font-size: 16px; }
.glyph em { font-family: "Liberation Serif", serif; font-size: 19px; }
.shadow b { font-weight: 500; font-size: 18px; text-shadow: 2px 1px 1px #aaa; }
.strike { font-size: 15px; }
.spacing { flex-direction: column; color: #444; font-size: 16px; line-height: 16px; }
.case { width: 28px; margin-left: 10px; color: #444; font-size: 17px; }
.format .sep { margin-left: 11px; }
.mark { margin: 0 6px 0 7px; }
.color { margin: 0 7px 0 10px; }

.list { padding-left: 8px; }
.list .chev { margin: 0 7px 0 3px; }
.align { padding-left: 10px; }
.pressed { width: 28px; margin-right: 1px; box-sizing: border-box; border: 1px solid #8a8a8a; background: #c6c6c6; }
.align .sep { margin-left: 3px; }
.cols { margin: 0 0 0 3px; }
.para .small { margin-left: auto; padding-right: 17px; }

.draw .body { padding-left: 14px; }
.draw .big { width: 44px; margin-right: 10px; }
.draw .arrange { margin-right: 4px; }
.draw .styles { width: 60px; margin-right: 6px; }
.draw .small.wide button { gap: 6px; }
.edit .small { margin-left: 13px; }
.edit .small button { gap: 3px; }
.edit .replace .chev { margin-left: 10px; }
.collapse { margin: auto 10px 4px auto; }

.work { display: flex; flex: 1; }
.thumbs { display: flex; flex: none; gap: 15px; width: 285px; box-sizing: border-box; margin: 2px 0; padding: 19px 25px 0 14px; border-right: 1px solid #c3c3c3; }
.index { display: flex; flex-direction: column; color: #d24726; font-size: 20px; line-height: 20px; }
.index span { padding-left: 2px; }
.thumb { flex: 1; align-self: flex-start; border: 3px solid #b7472a; background: #fff; padding: 1px; }
.thumb svg, .slide { width: 100%; height: auto; }
.pane { display: flex; flex: 1; margin: 0 0 2px 2px; border-bottom: 1px solid #c3c3c3; }
.stage { flex: 1; padding: 7px 73px 17px 72px; }
.slide { outline: 1px solid #cfcac8; }
.numeral { fill: #000; font: 900 260px "Inter", sans-serif; }
.headline { fill: #000; font: 350 44px "Noto Sans CJK SC", sans-serif; }
.subtitle { fill: #000; font: 17px "Liberation Sans", sans-serif; }
.copy { fill: #000; font: 13px "Noto Sans CJK SC", sans-serif; }
.part { fill: #000; font: 300 21px "Open Sans", sans-serif; }
.count { fill: #fff; font: 14px "Noto Sans", sans-serif; text-anchor: middle; }
.scroll { display: flex; flex: none; flex-direction: column; width: 18px; padding: 2px 2px 23px 0; }
.cap { height: 19px; box-sizing: border-box; border: 1px solid #c3c3c3; background: #fff; }
.track { flex: 1; background: #dadada; }
.grip { height: 48%; box-sizing: border-box; border: 1px solid #c3c3c3; background: #fff; }
.jump { height: 22px; }

.status { display: flex; align-items: center; height: 26px; border-top: 1px solid #c3c3c3; background: #f3f3f3; padding-left: 10px; }
.status .proof { margin: 0 21px 0 23px; }
.notes { gap: 5px; margin-left: auto; }
.comments { gap: 3px; margin: 0 24px 0 25px; }
.views { display: flex; align-self: stretch; }
.views button { width: 50px; }
.views .on { background: #c6c6c6; }
.zoom { display: flex; align-items: center; padding: 0 23px 0 5px; }
.zoom input { width: 126px; height: 15px; margin: 0 5px; appearance: none; background: linear-gradient(#aaa, #aaa) center / 100% 1px no-repeat, linear-gradient(#aaa, #aaa) center / 1px 8px no-repeat; }
.zoom input::-webkit-slider-thumb { appearance: none; width: 6px; height: 14px; background: #606060; }
.percent { margin: 0 18px 0 15px; }
</style>

<style>
body { background: #e6e6e6; }
</style>
